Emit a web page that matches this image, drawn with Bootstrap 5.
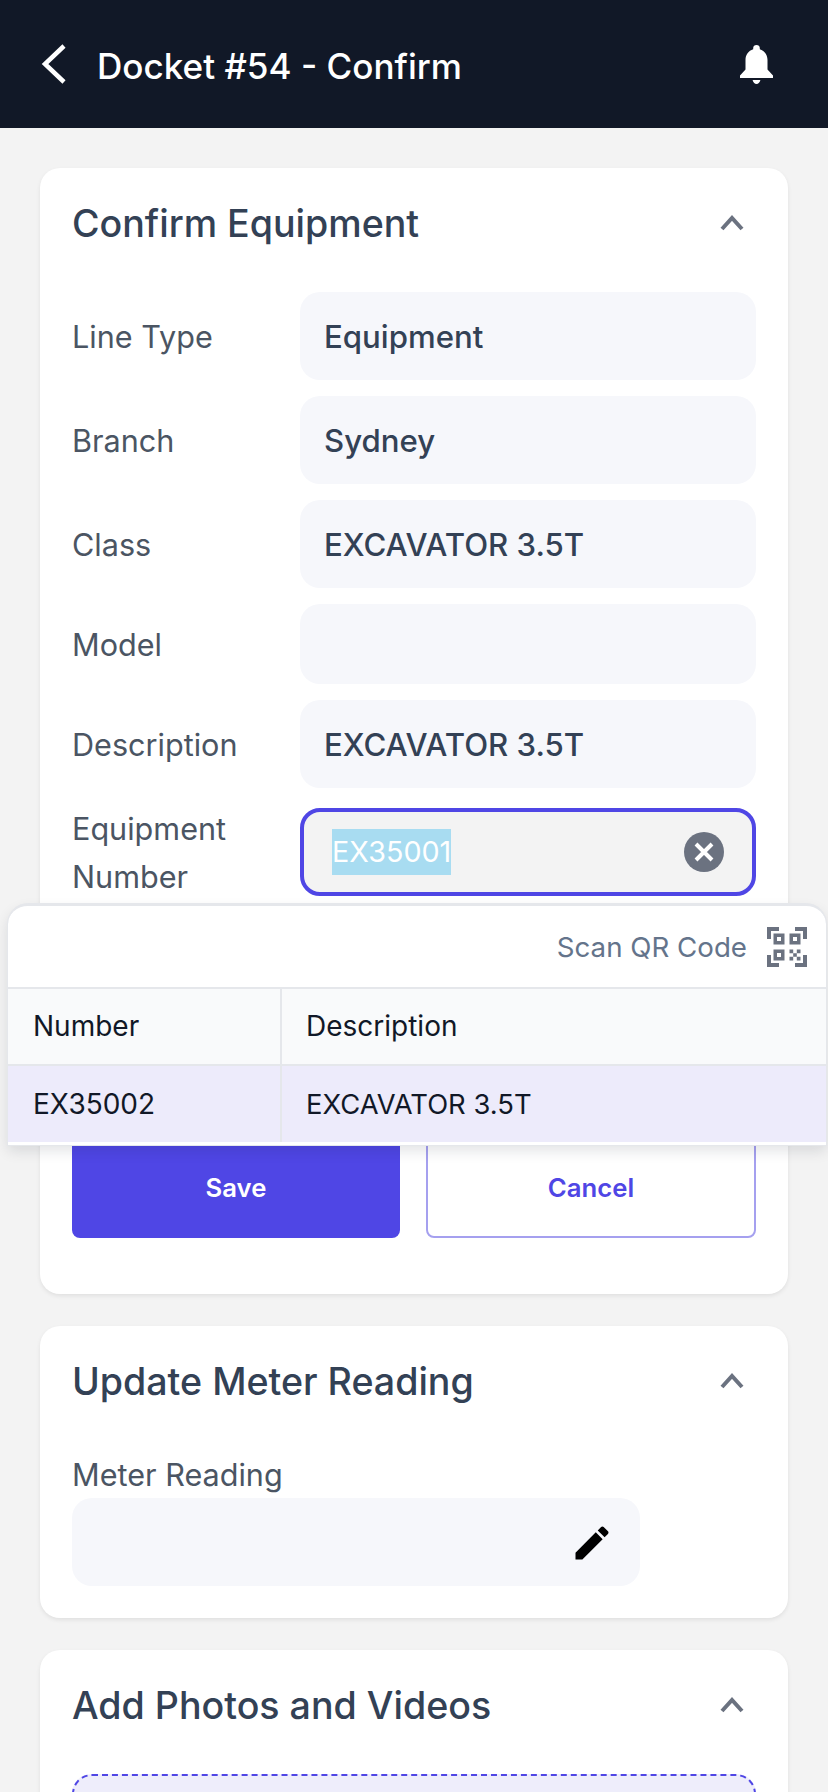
<!DOCTYPE html>
<html lang="en">
<head>
<meta charset="utf-8">
<title>Docket #54 - Confirm</title>
<link href="https://cdn.jsdelivr.net/npm/bootstrap@5.3.0/dist/css/bootstrap.min.css" rel="stylesheet">
<style>
html,body{height:1792px;overflow:hidden}
body{background:#f3f3f3;font-family:"Inter","Liberation Sans",sans-serif;color:#334155;font-size:30.6px;line-height:48px}
.screen{height:1792px}
.topbar{height:128px;background:#111827;padding:0 55px 0 41px;color:#fff}
.topbar-title{font-size:35.1px;font-weight:500;line-height:48px;margin:4px 0 0 31px}
.page-main{padding-top:40px}
.panel{background:#fff;border-radius:20px;margin:0 40px 32px;box-shadow:0 2px 4px rgba(0,0,0,.08);padding:0 32px}
.panel-pad{padding-bottom:32px}
.panel-head{height:124px;padding:28px 0 40px}
.panel-title{font-size:37.6px;font-weight:500;line-height:56px;margin:0;color:#334155}
.fold-icon{margin:0 11px 4px 0}
.form-line{display:flex;align-items:center;margin-bottom:16px}
.form-name{width:228px;flex:none;color:#4b5563;line-height:48px;margin-top:1px;margin-bottom:-1px}
.form-box{flex:1;height:88px;background:#f6f7fb;border-radius:20px;padding:2px 24px 0;font-size:31.2px;font-weight:500;color:#334155;display:flex;align-items:center}
.form-box.is-short{height:80px}
.form-box.is-active{background:#f3f3f3;border:4px solid #4f46e5;padding:0 28px;font-size:28.7px;font-weight:400;color:#fff;justify-content:space-between}
.sel-text{background:#a8dcf1;line-height:46px;height:46px}
.clear-dot{width:40px;height:40px;flex:none}
.picker{position:absolute;left:8px;top:904px;width:818px;height:241px;background:#fff;border-top:2px solid #e5e7eb;border-radius:20px 20px 0 0;box-shadow:0 0 0 1px #e5e7eb,0 6px 14px rgba(17,24,39,.12);z-index:5;font-size:27.7px}
.picker-top{height:81px;padding-right:19px;color:#64748b;gap:20px}
.picker-table{margin:0;table-layout:fixed;color:#111827;font-size:28px;line-height:40px;--bs-table-bg:transparent}
.picker-table td,.picker-table th{padding:17px 24px 18px;font-weight:400;border:0;border-top:2px solid #e5e7eb;height:77px;vertical-align:middle}
.picker-table th:first-child,.picker-table td:first-child{width:273px;border-right:2px solid #e5e7eb;padding-left:25px}
.picker-table td:last-child{font-size:27.4px}
.picker-table thead tr{background:#f9fafb}
.picker-table tbody tr{background:#edebfb}
.action-row{display:flex;gap:26px;padding-top:238px;padding-bottom:56px}
.act{height:100px;flex:none;font-size:25.7px;font-weight:600;border-radius:8px;line-height:1}
.act-save,.act-save:hover{width:328px;background:#4f46e5;color:#fff;border:0}
.act-cancel,.act-cancel:hover{width:330px;background:#fff;color:#4f46e5;border:2px solid #a5a0ef}
.meter-box{width:568px;height:88px;background:#f6f7fb;border-radius:20px;padding:2px 26px 0 0}
.drop-zone{height:120px;background:#eeedfb;border:2px dashed #4f46e5;border-radius:20px}
</style>
</head>
<body>
<div class="screen position-relative overflow-hidden">
<header class="topbar d-flex align-items-center justify-content-between">
  <div class="d-flex align-items-center">
    <svg width="25" height="40" viewBox="0 0 25 40" fill="none" stroke="#fff" stroke-width="4.500"><path d="M23 2 4 20l19 18"/></svg>
    <span class="topbar-title">Docket #54 - Confirm</span>
  </div>
  <svg width="33" height="39" viewBox="0 0 33 39" fill="#fff"><path d="M16.500 0c-1.900 0-3.300 1.300-3.300 3v1.300C8.500 5.600 5.500 10 5.500 15v9.500L0 30.500V33h33v-2.500l-5.500-6V15c0-5-3-9.400-7.700-10.700V3c0-1.700-1.400-3-3.300-3zM12.600 35c.4 2.300 2 4 3.900 4s3.500-1.700 3.900-4z"/></svg>
</header>
<main class="page-main">
  <section class="panel">
    <div class="panel-head d-flex align-items-center justify-content-between">
      <h2 class="panel-title">Confirm Equipment</h2>
      <svg class="fold-icon" width="26" height="18" viewBox="0 0 26 18" fill="none" stroke="#6b7280" stroke-width="4"><path d="M3 16 13 5l10 11"/></svg>
    </div>
    <div>
      <div class="form-line"><div class="form-name">Line Type</div><div class="form-box">Equipment</div></div>
      <div class="form-line"><div class="form-name">Branch</div><div class="form-box">Sydney</div></div>
      <div class="form-line"><div class="form-name">Class</div><div class="form-box">EXCAVATOR 3.5T</div></div>
      <div class="form-line"><div class="form-name">Model</div><div class="form-box is-short"></div></div>
      <div class="form-line"><div class="form-name">Description</div><div class="form-box">EXCAVATOR 3.5T</div></div>
      <div class="form-line mb-0"><div class="form-name">Equipment Number</div>
        <div class="form-box is-active"><span class="sel-text">EX35001</span>
          <svg class="clear-dot" viewBox="0 0 40 40"><circle cx="20" cy="20" r="20" fill="#6b7280"/><path d="M12 12l16 16M28 12 12 28" stroke="#fff" stroke-width="4"/></svg>
        </div>
      </div>
    </div>
    <div class="action-row">
      <button class="btn act act-save">Save</button>
      <button class="btn act act-cancel">Cancel</button>
    </div>
  </section>
  <section class="panel panel-pad">
    <div class="panel-head d-flex align-items-center justify-content-between">
      <h2 class="panel-title">Update Meter Reading</h2>
      <svg class="fold-icon" width="26" height="18" viewBox="0 0 26 18" fill="none" stroke="#6b7280" stroke-width="4"><path d="M3 16 13 5l10 11"/></svg>
    </div>
    <div class="form-name w-100">Meter Reading</div>
    <div class="meter-box d-flex align-items-center justify-content-end">
      <svg width="44" height="44" viewBox="0 0 24 24" fill="#000"><path d="M3 17.250V21h3.750L17.810 9.940l-3.750-3.750L3 17.250zM20.710 7.040c.39-.39.39-1.020 0-1.410l-2.340-2.340c-.39-.39-1.020-.39-1.410 0l-1.830 1.830 3.750 3.750 1.830-1.830z"/></svg>
    </div>
  </section>
  <section class="panel">
    <div class="panel-head d-flex align-items-center justify-content-between">
      <h2 class="panel-title">Add Photos and Videos</h2>
      <svg class="fold-icon" width="26" height="18" viewBox="0 0 26 18" fill="none" stroke="#6b7280" stroke-width="4"><path d="M3 16 13 5l10 11"/></svg>
    </div>
    <div class="drop-zone"></div>
  </section>
</main>
<div class="picker">
  <div class="picker-top d-flex align-items-center justify-content-end">
    <span>Scan QR Code</span>
    <svg width="40" height="40" viewBox="0 0 40 40" fill="#6b7280"><path d="M0 0h12v4H4v8H0zM28 0h12v12h-4V4h-8zM0 28h4v8h8v4H0zM36 28h4v12H28v-4h8z"/><path fill-rule="evenodd" d="M6.500 6.500h11v11h-11zm3.500 3.500v4h4v-4zM22.500 6.500h11v11h-11zm3.500 3.500v4h4v-4zM6.500 22.500h11v11h-11zm3.500 3.500v4h4v-4z"/><path d="M22.500 22.500h3.700v3.700h-3.700zM29.800 22.500h3.700v3.700h-3.700zM26.200 26.200h3.600v3.600h-3.600zM22.500 29.800h3.700v3.700h-3.700zM29.800 29.800h3.700v3.700h-3.700z"/></svg>
  </div>
  <table class="table picker-table">
    <thead><tr><th>Number</th><th>Description</th></tr></thead>
    <tbody><tr><td>EX35002</td><td>EXCAVATOR 3.5T</td></tr></tbody>
  </table>
</div>
</div>
<script src="https://cdn.jsdelivr.net/npm/bootstrap@5.3.0/dist/js/bootstrap.bundle.min.js"></script>
</body>
</html>
